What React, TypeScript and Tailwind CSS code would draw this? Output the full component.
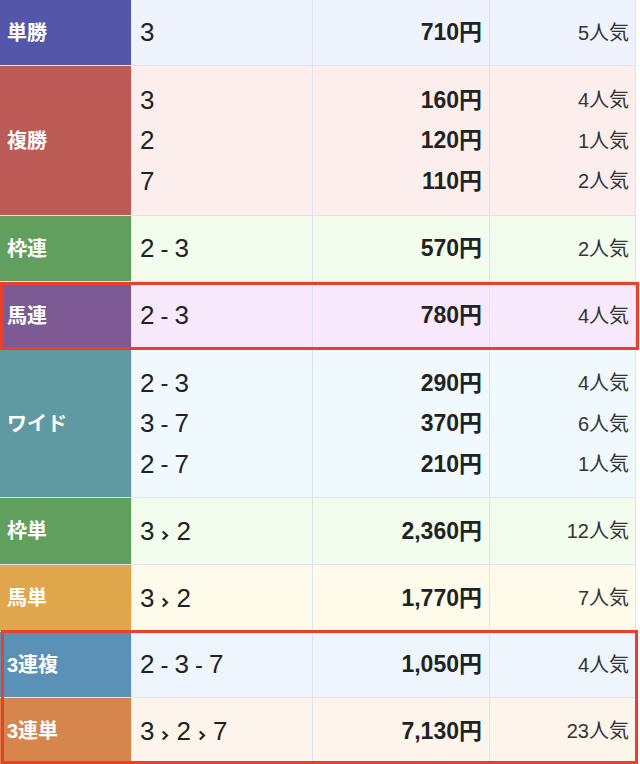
import React from "react";

type Line = [string, string, string];
type Row = {
  label: string;
  labelBg: string;
  rowBg: string;
  h: string;
  lines: Line[];
};

const rows: Row[] = [
  { label: "単勝", labelBg: "bg-[#5457a9]", rowBg: "bg-[#eef3fe]", h: "h-[66px]", lines: [["3", "710円", "5人気"]] },
  {
    label: "複勝",
    labelBg: "bg-[#bc5a55]",
    rowBg: "bg-[#fdeeee]",
    h: "h-[150px]",
    lines: [
      ["3", "160円", "4人気"],
      ["2", "120円", "1人気"],
      ["7", "110円", "2人気"],
    ],
  },
  { label: "枠連", labelBg: "bg-[#609f5e]", rowBg: "bg-[#f2fdee]", h: "h-[66px]", lines: [["2-3", "570円", "2人気"]] },
];

const row4: Row = { label: "馬連", labelBg: "bg-[#7e5a95]", rowBg: "bg-[#f7e9fb]", h: "h-[68px]", lines: [["2-3", "780円", "4人気"]] };

const rowsMid: Row[] = [
  {
    label: "ワイド",
    labelBg: "bg-[#5f9aa3]",
    rowBg: "bg-[#eff9fe]",
    h: "h-[148px]",
    lines: [
      ["2-3", "290円", "4人気"],
      ["3-7", "370円", "6人気"],
      ["2-7", "210円", "1人気"],
    ],
  },
  { label: "枠単", labelBg: "bg-[#609f5e]", rowBg: "bg-[#f2fdee]", h: "h-[67px]", lines: [["3>2", "2,360円", "12人気"]] },
  { label: "馬単", labelBg: "bg-[#dfa64c]", rowBg: "bg-[#fefbeb]", h: "h-[67px]", lines: [["3>2", "1,770円", "7人気"]] },
];

const rowsEnd: Row[] = [
  { label: "3連複", labelBg: "bg-[#5b90b7]", rowBg: "bg-[#eef5fd]", h: "h-[66px]", lines: [["2-3-7", "1,050円", "4人気"]] },
  { label: "3連単", labelBg: "bg-[#d6864c]", rowBg: "bg-[#fdf4ec]", h: "h-[67px]", lines: [["3>2>7", "7,130円", "23人気"]] },
];

function Combo({ s }: { s: string }) {
  const parts = s.split(/([->])/).filter((p) => p !== "");
  return (
    <span className="inline-flex items-center">
      {parts.map((p, i) => {
        if (p === "-")
          return (
            <span key={i} className="mx-[6px] text-[24px] leading-none">
              -
            </span>
          );
        if (p === ">")
          return (
            <svg key={i} width="8" height="11" viewBox="0 0 8 11" className="mx-[7px] mt-[8px]">
              <polyline points="1.8,1.5 6,5.5 1.8,9.5" fill="none" stroke="#222" strokeWidth="2.2" />
            </svg>
          );
        return <span key={i}>{p}</span>;
      })}
    </span>
  );
}

function TableRow({ r }: { r: Row }) {
  return (
    <div className={`flex ${r.h} border-b border-[#e1e3ec]`}>
      <div
        className={`w-[132px] shrink-0 ${r.labelBg} border-r border-[#e1e3ec] flex items-center pl-[7px] text-white font-bold text-[20px]`}
      >
        {r.label}
      </div>
      <div className={`w-[181px] shrink-0 ${r.rowBg} border-r border-[#e1e3ec] flex flex-col justify-center pl-[8px]`}>
        {r.lines.map((l, i) => (
          <div key={i} className="h-[40.5px] flex items-center text-[26px] text-[#222]">
            <Combo s={l[0]} />
          </div>
        ))}
      </div>
      <div className={`w-[177px] shrink-0 ${r.rowBg} border-r border-[#e1e3ec] flex flex-col justify-center pr-[7px]`}>
        {r.lines.map((l, i) => (
          <div key={i} className="h-[40.5px] flex items-center justify-end text-[23px] font-bold text-[#222]">
            {l[1]}
          </div>
        ))}
      </div>
      <div className={`w-[146px] shrink-0 ${r.rowBg} border-r border-[#e1e3ec] flex flex-col justify-center pr-[6px]`}>
        {r.lines.map((l, i) => (
          <div key={i} className="h-[40.5px] flex items-center justify-end text-[20px] text-[#333]">
            {l[2]}
          </div>
        ))}
      </div>
    </div>
  );
}

export default function App() {
  return (
    <div
      className="w-[640px] h-[764px] overflow-hidden bg-white"
      style={{ fontFamily: '"Liberation Sans", "Noto Sans CJK JP", sans-serif' }}
    >
      <div className="w-[636px]">
        {rows.map((r) => (
          <TableRow key={r.label} r={r} />
        ))}
        <div className="relative">
          <TableRow r={row4} />
          <div className="absolute left-0 top-0 bottom-0 right-[-3px] border-[3px] border-[#e8402a] pointer-events-none" />
        </div>
        {rowsMid.map((r) => (
          <TableRow key={r.label} r={r} />
        ))}
        <div className="relative">
          {rowsEnd.map((r) => (
            <TableRow key={r.label} r={r} />
          ))}
          <div className="absolute left-[1px] top-[-2px] bottom-[1px] right-[-2px] border-[3px] border-[#e8402a] pointer-events-none" />
        </div>
      </div>
    </div>
  );
}
